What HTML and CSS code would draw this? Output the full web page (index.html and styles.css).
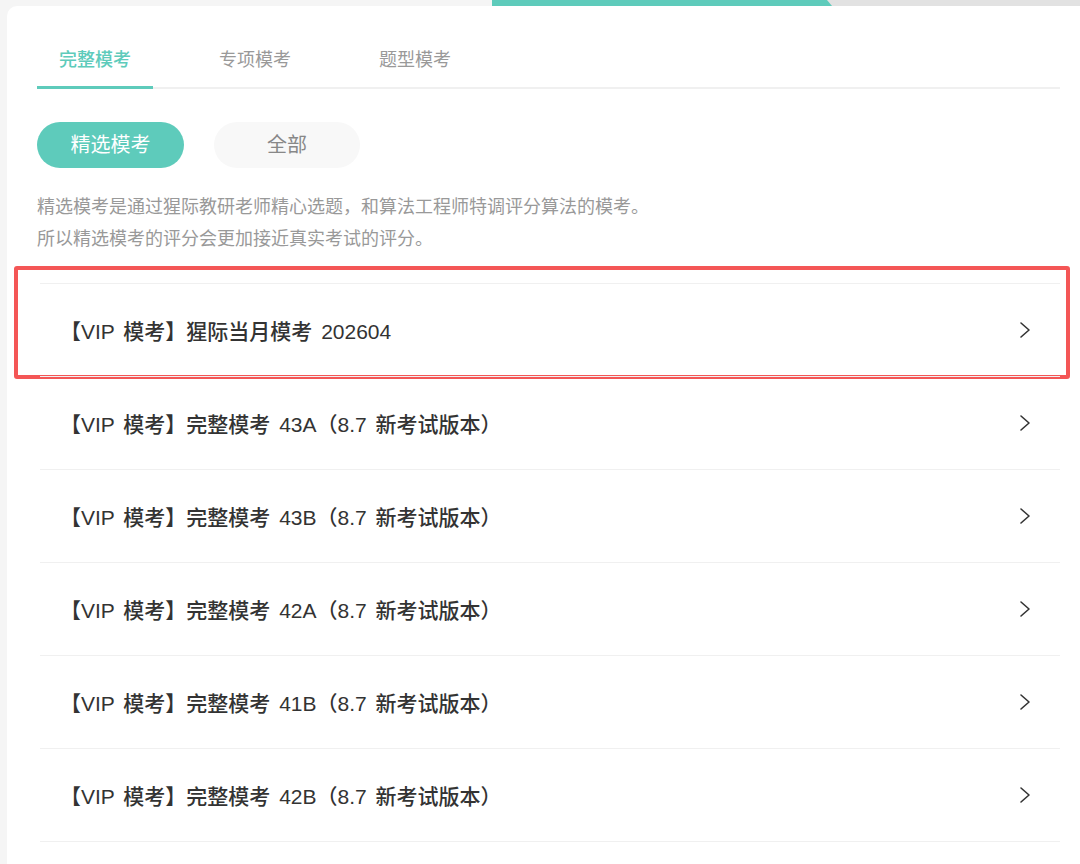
FILE: index.html
```html
<!DOCTYPE html>
<html lang="zh">
<head>
    <meta charset="UTF-8">
    <meta name="viewport" content="width=device-width, initial-scale=1.0">
    <title>完整模考</title>
    <link rel="stylesheet" href="styles.css">
</head>
<body>
    <div class="progress">
        <div class="progress-fill"></div>
    </div>
    <div class="card">
        <div class="tabs">
            <div class="tab active">完整模考</div>
            <div class="tab">专项模考</div>
            <div class="tab">题型模考</div>
        </div>
        <div class="pills">
            <div class="pill active">精选模考</div>
            <div class="pill">全部</div>
        </div>
        <div class="desc">
            <p>精选模考是通过猩际教研老师精心选题，和算法工程师特调评分算法的模考。</p>
            <p>所以精选模考的评分会更加接近真实考试的评分。</p>
        </div>
        <div class="list">
            <div class="row highlight">
                <span class="title">【VIP 模考】猩际当月模考 202604</span>
                <svg class="arrow" width="14" height="18" viewBox="0 0 14 18"><path d="M3 2l8 7-8 7" fill="none" stroke="#333" stroke-width="1.6" stroke-linecap="round" stroke-linejoin="round"/></svg>
            </div>
            <div class="row">
                <span class="title">【VIP 模考】完整模考 43A（8.7 新考试版本）</span>
                <svg class="arrow" width="14" height="18" viewBox="0 0 14 18"><path d="M3 2l8 7-8 7" fill="none" stroke="#333" stroke-width="1.6" stroke-linecap="round" stroke-linejoin="round"/></svg>
            </div>
            <div class="row">
                <span class="title">【VIP 模考】完整模考 43B（8.7 新考试版本）</span>
                <svg class="arrow" width="14" height="18" viewBox="0 0 14 18"><path d="M3 2l8 7-8 7" fill="none" stroke="#333" stroke-width="1.6" stroke-linecap="round" stroke-linejoin="round"/></svg>
            </div>
            <div class="row">
                <span class="title">【VIP 模考】完整模考 42A（8.7 新考试版本）</span>
                <svg class="arrow" width="14" height="18" viewBox="0 0 14 18"><path d="M3 2l8 7-8 7" fill="none" stroke="#333" stroke-width="1.6" stroke-linecap="round" stroke-linejoin="round"/></svg>
            </div>
            <div class="row">
                <span class="title">【VIP 模考】完整模考 41B（8.7 新考试版本）</span>
                <svg class="arrow" width="14" height="18" viewBox="0 0 14 18"><path d="M3 2l8 7-8 7" fill="none" stroke="#333" stroke-width="1.6" stroke-linecap="round" stroke-linejoin="round"/></svg>
            </div>
            <div class="row">
                <span class="title">【VIP 模考】完整模考 42B（8.7 新考试版本）</span>
                <svg class="arrow" width="14" height="18" viewBox="0 0 14 18"><path d="M3 2l8 7-8 7" fill="none" stroke="#333" stroke-width="1.6" stroke-linecap="round" stroke-linejoin="round"/></svg>
            </div>
        </div>
    </div>
</body>
</html>
```

FILE: styles.css
```css
body {
    margin: 0;
    background-color: #f5f5f5;
    font-family: "Liberation Sans", "Noto Sans CJK SC", sans-serif;
}
.progress {
    height: 6px;
    margin-left: 492px;
    background: #e2e2e2;
}
.progress-fill {
    width: 340px;
    height: 100%;
    background: #5ecbbb;
    clip-path: polygon(0 0, calc(100% - 5px) 0, 100% 100%, 0 100%);
}
.card {
    margin-left: 7px;
    background: white;
    border-top-left-radius: 10px;
    padding: 0 20px 0 30px;
    height: calc(100vh - 6px);
    box-sizing: border-box;
}
.tabs {
    display: flex;
    gap: 44px;
    padding-top: 42px;
    border-bottom: 2px solid #f0f0f0;
}
.tab {
    width: 116px;
    text-align: center;
    font-size: 18px;
    line-height: 24px;
    padding-bottom: 14px;
    color: #999;
    margin-bottom: -2px;
    border-bottom: 3px solid transparent;
}
.tab.active {
    color: #5ecbbb;
    font-weight: 500;
    border-bottom-color: #5ecbbb;
}
.pills {
    display: flex;
    gap: 30px;
    margin-top: 33px;
}
.pill {
    width: 146px;
    height: 46px;
    line-height: 46px;
    border-radius: 23px;
    text-align: center;
    font-size: 20px;
    color: #888;
    background: #f8f8f8;
}
.pill.active {
    width: 147px;
    background: #5ecbbb;
    color: white;
}
.desc {
    margin-top: 23px;
    font-size: 18px;
    line-height: 32px;
    color: #999;
}
.desc p {
    margin: 0;
}
.list {
    margin-top: 28px;
    margin-left: 3px;
    border-bottom: 1px solid #f0f0f0;
}
.row {
    position: relative;
    display: flex;
    align-items: center;
    justify-content: space-between;
    height: 92px;
    border-top: 1px solid #f0f0f0;
    padding: 0 28px 0 20px;
}
.title {
    font-size: 21px;
    font-weight: 500;
    color: #333;
    word-spacing: 3px;
}
.row.highlight::after {
    content: "";
    position: absolute;
    left: -26px;
    right: -10px;
    top: -18px;
    bottom: -3px;
    border: 4px solid #f45656;
    border-radius: 3px;
}
```
